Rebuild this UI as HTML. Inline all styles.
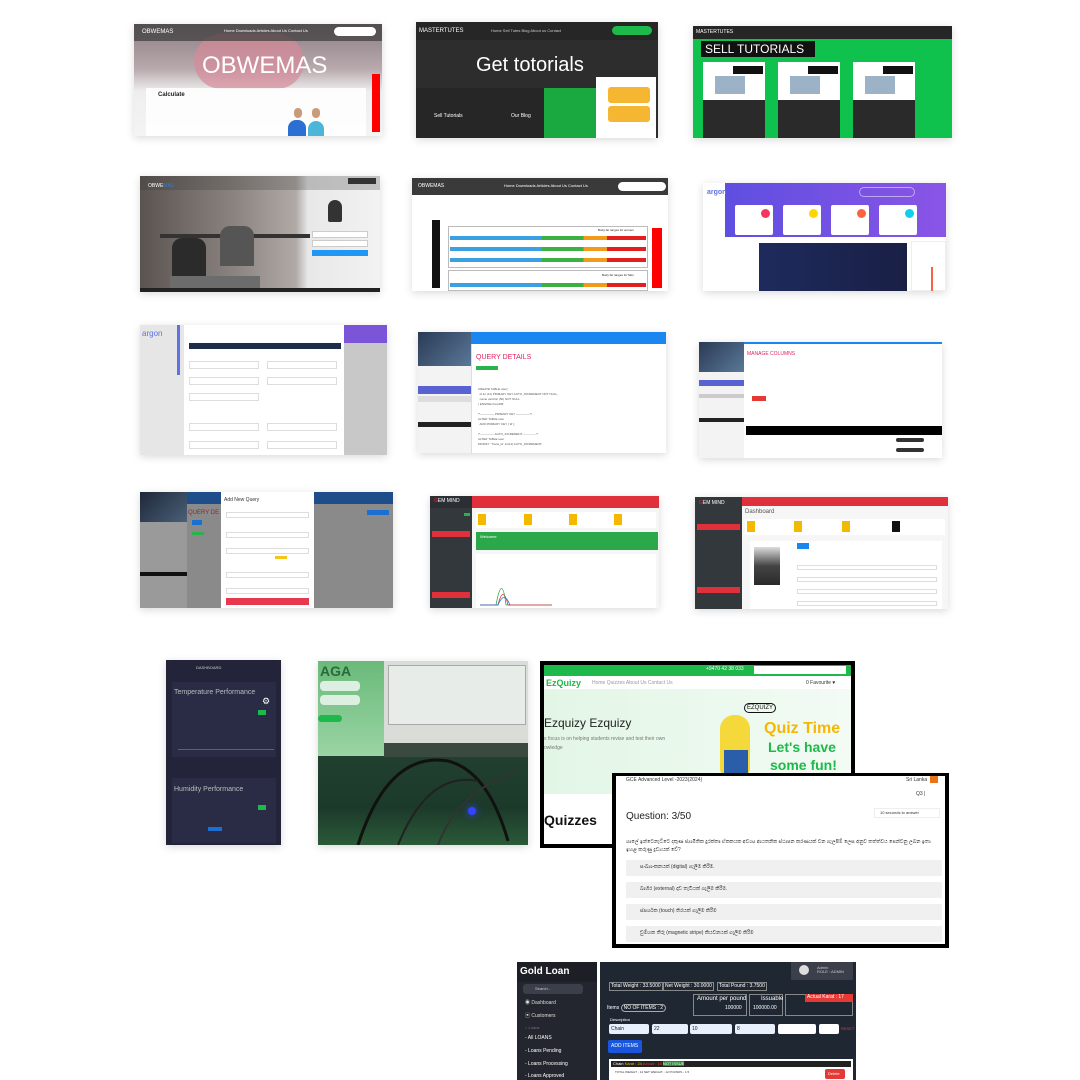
<!DOCTYPE html>
<html><head><meta charset="utf-8">
<style>
*{margin:0;padding:0;box-sizing:border-box}
body{width:1080px;height:1080px;background:#fff;position:relative;overflow:hidden;font-family:"Liberation Sans","Noto Sans CJK SC",sans-serif}
.a{position:absolute}
.t{position:absolute;white-space:nowrap;line-height:1}
.sh{box-shadow:0 2px 8px rgba(0,0,0,.15)}
</style></head><body>

<!-- A OBWEMAS -->
<div class="a sh" style="left:134px;top:24px;width:248px;height:112px;background:linear-gradient(180deg,#8a7c80 0%,#b8a9ad 40%,#eee 60%,#f4f4f4 100%);overflow:hidden">
 <div class="a" style="left:60px;top:10px;width:110px;height:55px;background:#d68a9a;opacity:.7;border-radius:30px"></div>
 <div class="a" style="left:0;top:0;width:248px;height:17px;background:rgba(60,60,60,.7)"></div>
 <div class="t" style="left:8px;top:5px;font-size:6px;color:#fff">OBWEMAS</div>
 <div class="t" style="left:90px;top:5px;font-size:4px;color:#fff">Home  Downloads  Articles  About Us  Contact Us</div>
 <div class="a" style="left:200px;top:3px;width:42px;height:9px;background:#fff;border-radius:5px"></div>
 <div class="t" style="left:68px;top:30px;font-size:24px;color:#fff">OBWEMAS</div>
 <div class="a" style="left:12px;top:64px;width:220px;height:48px;background:rgba(255,255,255,.85)"></div>
 <div class="t" style="left:24px;top:68px;font-size:6px;color:#222;font-weight:bold">Calculate</div>
 <div class="a" style="left:154px;top:96px;width:18px;height:16px;background:#2a6fd1;border-radius:8px 8px 0 0"></div>
 <div class="a" style="left:174px;top:97px;width:16px;height:15px;background:#4cb6d8;border-radius:8px 8px 0 0"></div>
 <div class="a" style="left:160px;top:84px;width:8px;height:10px;background:#c99b7a;border-radius:4px"></div>
 <div class="a" style="left:178px;top:84px;width:8px;height:10px;background:#c99b7a;border-radius:4px"></div>
 <div class="a" style="left:238px;top:50px;width:8px;height:58px;background:#f00"></div>
</div>

<!-- B MASTERTUTES -->
<div class="a sh" style="left:416px;top:22px;width:242px;height:116px;background:#2d2d2d;overflow:hidden">
 <div class="a" style="left:0;top:0;width:242px;height:18px;background:#262626"></div>
 <div class="t" style="left:3px;top:6px;font-size:6px;color:#fff">MASTERTUTES</div>
 <div class="t" style="left:75px;top:7px;font-size:4px;color:#ccc">Home    Sell Tutes    Blog    About us    Contact</div>
 <div class="a" style="left:196px;top:4px;width:40px;height:9px;border:1px solid #1db94a;border-radius:5px;background:#1db94a"></div>
 <div class="t" style="left:60px;top:33px;font-size:20px;color:#fff">Get totorials</div>
 <div class="a" style="left:0;top:66px;width:128px;height:50px;background:#262626"></div>
 <div class="a" style="left:128px;top:66px;width:60px;height:50px;background:#1aa940"></div>
 <div class="a" style="left:188px;top:66px;width:20px;height:50px;background:#21c050"></div>
 <div class="t" style="left:18px;top:92px;font-size:5px;color:#fff">Sell Tutorials</div>
 <div class="t" style="left:95px;top:92px;font-size:5px;color:#fff">Our Blog</div>
 <div class="a" style="left:180px;top:55px;width:60px;height:61px;background:#fff"></div>
 <div class="a" style="left:192px;top:65px;width:42px;height:16px;background:#f5b731;border-radius:3px"></div>
 <div class="a" style="left:192px;top:84px;width:42px;height:16px;background:#f5b731;border-radius:3px"></div>
</div>

<!-- C SELL TUTORIALS -->
<div class="a sh" style="left:693px;top:26px;width:259px;height:112px;background:#0ec24d;overflow:hidden">
 <div class="a" style="left:0;top:0;width:259px;height:13px;background:#262626"></div>
 <div class="t" style="left:3px;top:4px;font-size:5px;color:#fff">MASTERTUTES</div>
 <div class="a" style="left:8px;top:15px;width:114px;height:16px;background:#111"></div>
 <div class="t" style="left:12px;top:17px;font-size:12px;color:#fff">SELL TUTORIALS</div>
 <div class="a" style="left:10px;top:36px;width:62px;height:76px;background:#fff"></div>
 <div class="a" style="left:85px;top:36px;width:62px;height:76px;background:#fff"></div>
 <div class="a" style="left:160px;top:36px;width:62px;height:76px;background:#fff"></div>
 <div class="a" style="left:10px;top:74px;width:62px;height:38px;background:#2a2a2a"></div>
 <div class="a" style="left:85px;top:74px;width:62px;height:38px;background:#2a2a2a"></div>
 <div class="a" style="left:160px;top:74px;width:62px;height:38px;background:#2a2a2a"></div>
 <div class="a" style="left:40px;top:40px;width:30px;height:8px;background:#111"></div>
 <div class="a" style="left:115px;top:40px;width:30px;height:8px;background:#111"></div>
 <div class="a" style="left:190px;top:40px;width:30px;height:8px;background:#111"></div>
 <div class="a" style="left:22px;top:50px;width:30px;height:18px;background:#5a7fa0;opacity:.6"></div>
 <div class="a" style="left:97px;top:50px;width:30px;height:18px;background:#5a7fa0;opacity:.6"></div>
 <div class="a" style="left:172px;top:50px;width:30px;height:18px;background:#5a7fa0;opacity:.6"></div>
</div>

<!-- D gym photo -->
<div class="a sh" style="left:140px;top:176px;width:240px;height:116px;background:linear-gradient(90deg,#5a5450,#8c8480 40%,#b0aaa6 65%,#e8e8e8 70%,#f2f2f2);overflow:hidden">
 <div class="a" style="left:0;top:0;width:240px;height:14px;background:rgba(50,50,50,.25)"></div>
 <div class="t" style="left:8px;top:8px;font-size:5px;color:#fff">OBWE<span style="color:#2a7de1">MAS</span></div>
 <div class="a" style="left:20px;top:58px;width:150px;height:4px;background:#333"></div>
 <div class="a" style="left:32px;top:62px;width:34px;height:40px;background:#2b2b2b;border-radius:10px 10px 0 0"></div>
 <div class="a" style="left:80px;top:50px;width:34px;height:40px;background:#555;border-radius:10px 10px 0 0"></div>
 <div class="a" style="left:30px;top:100px;width:90px;height:16px;background:#6c6c6c"></div>
 <div class="a" style="left:188px;top:24px;width:14px;height:22px;background:#333;border-radius:7px 7px 2px 2px"></div>
 <div class="a" style="left:172px;top:55px;width:56px;height:7px;background:#fff;border:1px solid #ccc"></div>
 <div class="a" style="left:172px;top:64px;width:56px;height:7px;background:#fff;border:1px solid #ccc"></div>
 <div class="a" style="left:172px;top:74px;width:56px;height:6px;background:#2196f3"></div>
 <div class="a" style="left:208px;top:2px;width:28px;height:6px;background:#333"></div>
 <div class="a" style="left:0;top:112px;width:240px;height:4px;background:#222"></div>
</div>

<!-- E body ranges -->
<div class="a sh" style="left:412px;top:178px;width:256px;height:113px;background:#fff;overflow:hidden">
 <div class="a" style="left:0;top:0;width:256px;height:17px;background:#3a3a3a"></div>
 <div class="t" style="left:6px;top:6px;font-size:5px;color:#fff">OBWEMAS</div>
 <div class="t" style="left:92px;top:6px;font-size:4px;color:#fff">Home  Downloads  Articles  About Us  Contact Us</div>
 <div class="a" style="left:206px;top:4px;width:48px;height:9px;background:#fff;border-radius:5px"></div>
 <div class="a" style="left:20px;top:42px;width:8px;height:68px;background:#111"></div>
 <div class="a" style="left:36px;top:48px;width:200px;height:42px;border:1px solid #bbb"></div>
 <div class="a" style="left:36px;top:92px;width:200px;height:21px;border:1px solid #bbb"></div>
 <div class="t" style="left:186px;top:51px;font-size:3px;color:#222">Body fat ranges for women</div>
 <div class="t" style="left:190px;top:96px;font-size:3px;color:#222">Body fat ranges for Men</div>
 <div class="a" style="left:38px;top:58px;width:196px;height:4px;background:linear-gradient(90deg,#3aa0e0 0 47%,#3cb043 47% 68%,#f29a1b 68% 80%,#e02020 80%)"></div>
 <div class="a" style="left:38px;top:69px;width:196px;height:4px;background:linear-gradient(90deg,#3aa0e0 0 47%,#3cb043 47% 68%,#f29a1b 68% 80%,#e02020 80%)"></div>
 <div class="a" style="left:38px;top:80px;width:196px;height:4px;background:linear-gradient(90deg,#3aa0e0 0 47%,#3cb043 47% 68%,#f29a1b 68% 80%,#e02020 80%)"></div>
 <div class="a" style="left:38px;top:105px;width:196px;height:4px;background:linear-gradient(90deg,#3aa0e0 0 47%,#3cb043 47% 68%,#f29a1b 68% 80%,#e02020 80%)"></div>
 <div class="a" style="left:240px;top:50px;width:10px;height:60px;background:#f00"></div>
</div>

<!-- F argon -->
<div class="a sh" style="left:703px;top:183px;width:243px;height:108px;background:#fff;overflow:hidden">
 <div class="a" style="left:22px;top:0;width:221px;height:54px;background:linear-gradient(90deg,#5e4fe0,#8a55e6)"></div>
 <div class="t" style="left:4px;top:6px;font-size:7px;color:#5e72e4;font-weight:bold">argon</div>
 <div class="a" style="left:156px;top:4px;width:56px;height:10px;border:1px solid rgba(255,255,255,.5);border-radius:6px"></div>
 <div class="a" style="left:32px;top:22px;width:38px;height:30px;background:#fff;border-radius:2px"></div>
 <div class="a" style="left:80px;top:22px;width:38px;height:30px;background:#fff;border-radius:2px"></div>
 <div class="a" style="left:128px;top:22px;width:38px;height:30px;background:#fff;border-radius:2px"></div>
 <div class="a" style="left:176px;top:22px;width:38px;height:30px;background:#fff;border-radius:2px"></div>
 <div class="a" style="left:58px;top:26px;width:9px;height:9px;background:#f5365c;border-radius:50%"></div>
 <div class="a" style="left:106px;top:26px;width:9px;height:9px;background:#ffd600;border-radius:50%"></div>
 <div class="a" style="left:154px;top:26px;width:9px;height:9px;background:#fb6340;border-radius:50%"></div>
 <div class="a" style="left:202px;top:26px;width:9px;height:9px;background:#11cdef;border-radius:50%"></div>
 <div class="a" style="left:56px;top:60px;width:148px;height:48px;background:linear-gradient(90deg,#1d2b5c,#1a1f45)"></div>
 <div class="a" style="left:208px;top:58px;width:35px;height:50px;background:#fff;border:1px solid #eee"></div>
 <div class="a" style="left:228px;top:84px;width:2px;height:24px;background:#fb6340"></div>
</div>

<!-- G argon form -->
<div class="a sh" style="left:140px;top:325px;width:247px;height:130px;background:#c8c8c8;overflow:hidden">
 <div class="a" style="left:0;top:0;width:45px;height:130px;background:#e6e6e6"></div>
 <div class="t" style="left:2px;top:5px;font-size:8px;color:#5e72e4">argon</div>
 <div class="a" style="left:44px;top:0;width:160px;height:130px;background:#fff"></div>
 <div class="a" style="left:49px;top:18px;width:152px;height:6px;background:#1f2d4a"></div>
 <div class="a" style="left:204px;top:0;width:43px;height:18px;background:#7b55d8"></div>
 <div class="a" style="left:37px;top:0;width:3px;height:50px;background:#5e72e4"></div>
 <div class="a" style="left:49px;top:36px;width:70px;height:8px;border:1px solid #ddd"></div>
 <div class="a" style="left:127px;top:36px;width:70px;height:8px;border:1px solid #ddd"></div>
 <div class="a" style="left:49px;top:52px;width:70px;height:8px;border:1px solid #ddd"></div>
 <div class="a" style="left:127px;top:52px;width:70px;height:8px;border:1px solid #ddd"></div>
 <div class="a" style="left:49px;top:68px;width:70px;height:8px;border:1px solid #ddd"></div>
 <div class="a" style="left:49px;top:98px;width:70px;height:8px;border:1px solid #ddd"></div>
 <div class="a" style="left:127px;top:98px;width:70px;height:8px;border:1px solid #ddd"></div>
 <div class="a" style="left:49px;top:116px;width:70px;height:8px;border:1px solid #ddd"></div>
 <div class="a" style="left:127px;top:116px;width:70px;height:8px;border:1px solid #ddd"></div>
</div>

<!-- H QUERY DETAILS -->
<div class="a sh" style="left:418px;top:332px;width:248px;height:121px;background:#fff;overflow:hidden">
 <div class="a" style="left:0;top:0;width:53px;height:34px;background:linear-gradient(135deg,#2a3a55,#5a7898)"></div>
 <div class="a" style="left:53px;top:0;width:195px;height:12px;background:#1a86f0"></div>
 <div class="t" style="left:58px;top:22px;font-size:7px;color:#e0245e">QUERY DETAILS</div>
 <div class="a" style="left:58px;top:34px;width:22px;height:4px;background:#2ab34a"></div>
 <div class="a" style="left:0;top:34px;width:53px;height:87px;background:#f3f3f3"></div>
 <div class="a" style="left:0;top:54px;width:53px;height:8px;background:#5862d0"></div>
 <div class="a" style="left:0;top:64px;width:53px;height:6px;background:#ddd"></div>
 <div class="a" style="left:0;top:90px;width:53px;height:5px;background:#222"></div>
 <div class="a" style="left:53px;top:12px;width:1px;height:109px;background:#ddd"></div>
 <div class="t" style="left:60px;top:55px;font-size:3px;color:#555;line-height:5px;white-space:pre">CREATE TABLE user(
  id int (11) PRIMARY KEY AUTO_INCREMENT NOT NULL,
  name varchar (50) NOT NULL
) ENGINE=InnoDB;

/*-------------- PRIMARY KEY --------------*/
ALTER TABLE user
  ADD PRIMARY KEY (`id`);

/*-------------- AUTO_INCREMENT -------------*/
ALTER TABLE user
MODIFY `Trans_id` int(11) AUTO_INCREMENT;</div>
</div>

<!-- I MANAGE COLUMNS -->
<div class="a sh" style="left:699px;top:342px;width:243px;height:116px;background:#fff;overflow:hidden">
 <div class="a" style="left:0;top:0;width:45px;height:30px;background:linear-gradient(135deg,#2a3a55,#5a7898)"></div>
 <div class="a" style="left:45px;top:0;width:198px;height:2px;background:#1a86f0"></div>
 <div class="t" style="left:48px;top:10px;font-size:5px;color:#e0245e">MANAGE COLUMNS</div>
 <div class="a" style="left:0;top:30px;width:45px;height:86px;background:#f3f3f3"></div>
 <div class="a" style="left:0;top:38px;width:45px;height:6px;background:#5862d0"></div>
 <div class="a" style="left:0;top:52px;width:45px;height:4px;background:#ccc"></div>
 <div class="a" style="left:0;top:76px;width:45px;height:4px;background:#222"></div>
 <div class="a" style="left:53px;top:54px;width:14px;height:5px;background:#e53935"></div>
 <div class="a" style="left:47px;top:84px;width:196px;height:9px;background:#000"></div>
 <div class="a" style="left:197px;top:96px;width:28px;height:4px;background:#333;border-radius:2px"></div>
 <div class="a" style="left:197px;top:106px;width:28px;height:4px;background:#333;border-radius:2px"></div>
</div>

<!-- J Add New Query -->
<div class="a sh" style="left:140px;top:492px;width:253px;height:116px;background:#8a8a8a;overflow:hidden">
 <div class="a" style="left:0;top:0;width:47px;height:30px;background:linear-gradient(135deg,#1e2838,#4a5f78)"></div>
 <div class="a" style="left:47px;top:0;width:206px;height:12px;background:#1e4d8a"></div>
 <div class="a" style="left:0;top:30px;width:47px;height:86px;background:#9a9a9a"></div>
 <div class="a" style="left:0;top:80px;width:47px;height:4px;background:#111"></div>
 <div class="a" style="left:81px;top:0;width:93px;height:116px;background:#fff"></div>
 <div class="t" style="left:84px;top:6px;font-size:5px;color:#333">Add New Query</div>
 <div class="t" style="left:48px;top:18px;font-size:6px;color:#8b2a2a">QUERY DE</div>
 <div class="a" style="left:52px;top:28px;width:10px;height:5px;background:#1a6fd0"></div>
 <div class="a" style="left:52px;top:40px;width:12px;height:3px;background:#2ab34a"></div>
 <div class="a" style="left:227px;top:18px;width:22px;height:5px;background:#1a6fd0"></div>
 <div class="a" style="left:86px;top:20px;width:83px;height:6px;border:1px solid #ddd"></div>
 <div class="a" style="left:86px;top:40px;width:83px;height:6px;border:1px solid #ddd"></div>
 <div class="a" style="left:86px;top:56px;width:83px;height:6px;border:1px solid #ddd"></div>
 <div class="a" style="left:135px;top:64px;width:12px;height:3px;background:#f5c518"></div>
 <div class="a" style="left:86px;top:80px;width:83px;height:6px;border:1px solid #ddd"></div>
 <div class="a" style="left:86px;top:96px;width:83px;height:6px;border:1px solid #ddd"></div>
 <div class="a" style="left:86px;top:106px;width:83px;height:7px;background:#e63950"></div>
</div>

<!-- K GEM MIND -->
<div class="a sh" style="left:430px;top:496px;width:229px;height:112px;background:#f6f6f6;overflow:hidden">
 <div class="a" style="left:0;top:0;width:42px;height:112px;background:#33383d"></div>
 <div class="a" style="left:0;top:0;width:42px;height:12px;background:#2b2f33"></div>
 <div class="t" style="left:4px;top:3px;font-size:5px;color:#fff"><span style="color:#e0303c">G</span>EM MIND</div>
 <div class="a" style="left:42px;top:0;width:187px;height:12px;background:#e0303c"></div>
 <div class="a" style="left:2px;top:35px;width:38px;height:6px;background:#e0303c"></div>
 <div class="a" style="left:2px;top:96px;width:38px;height:6px;background:#e0303c"></div>
 <div class="a" style="left:34px;top:17px;width:6px;height:3px;background:#2ab34a"></div>
 <div class="a" style="left:46px;top:16px;width:180px;height:16px;background:#fff"></div>
 <div class="a" style="left:48px;top:18px;width:8px;height:11px;background:#f5b800"></div>
 <div class="a" style="left:94px;top:18px;width:8px;height:11px;background:#f5b800"></div>
 <div class="a" style="left:139px;top:18px;width:8px;height:11px;background:#f5b800"></div>
 <div class="a" style="left:184px;top:18px;width:8px;height:11px;background:#f5b800"></div>
 <div class="a" style="left:46px;top:36px;width:182px;height:18px;background:#2aa84a"></div>
 <div class="t" style="left:50px;top:39px;font-size:4px;color:#fff">Welcome</div>
 <div class="a" style="left:46px;top:58px;width:180px;height:54px;background:#fff"></div>
 <svg class="a" style="left:50px;top:74px" width="72" height="36"><path d="M0 35 L16 35 Q22 2 26 35 L72 35" stroke="#2aa84a" fill="none" stroke-width="0.8"/><path d="M0 35 L18 35 Q23 14 28 35 L72 35" stroke="#e0303c" fill="none" stroke-width="0.8"/><path d="M0 35 L18 35 Q24 20 30 35" stroke="#2a6fd0" fill="none" stroke-width="0.8"/></svg>
</div>

<!-- L Dashboard profile -->
<div class="a sh" style="left:695px;top:497px;width:253px;height:112px;background:#f6f6f6;overflow:hidden">
 <div class="a" style="left:0;top:0;width:47px;height:112px;background:#33383d"></div>
 <div class="t" style="left:4px;top:4px;font-size:5px;color:#fff"><span style="color:#e0303c">G</span>EM MIND</div>
 <div class="a" style="left:47px;top:0;width:206px;height:9px;background:#e0303c"></div>
 <div class="t" style="left:50px;top:12px;font-size:6px;color:#555">Dashboard</div>
 <div class="a" style="left:2px;top:27px;width:43px;height:6px;background:#e0303c"></div>
 <div class="a" style="left:2px;top:90px;width:43px;height:6px;background:#e0303c"></div>
 <div class="a" style="left:50px;top:22px;width:200px;height:16px;background:#fff"></div>
 <div class="a" style="left:52px;top:24px;width:8px;height:11px;background:#f5b800"></div>
 <div class="a" style="left:99px;top:24px;width:8px;height:11px;background:#f5b800"></div>
 <div class="a" style="left:147px;top:24px;width:8px;height:11px;background:#f5b800"></div>
 <div class="a" style="left:197px;top:24px;width:8px;height:11px;background:#111"></div>
 <div class="a" style="left:55px;top:44px;width:192px;height:68px;background:#fff"></div>
 <div class="a" style="left:59px;top:50px;width:26px;height:38px;background:linear-gradient(#ddd,#444 50%,#2a2a2a)"></div>
 <div class="a" style="left:102px;top:46px;width:12px;height:6px;background:#1a86f0"></div>
 <div class="a" style="left:102px;top:68px;width:140px;height:5px;border:1px solid #ddd"></div>
 <div class="a" style="left:102px;top:80px;width:140px;height:5px;border:1px solid #ddd"></div>
 <div class="a" style="left:102px;top:92px;width:140px;height:5px;border:1px solid #ddd"></div>
 <div class="a" style="left:102px;top:104px;width:140px;height:5px;border:1px solid #ddd"></div>
</div>

<!-- M mobile dashboard -->
<div class="a sh" style="left:166px;top:660px;width:115px;height:185px;background:#23243a;overflow:hidden">
 <div class="t" style="left:30px;top:6px;font-size:4px;color:#ccc">DASHBOARD</div>
 <div class="a" style="left:6px;top:22px;width:104px;height:75px;background:#2a2c46"></div>
 <div class="t" style="left:8px;top:29px;font-size:7px;color:#bbb">Temperature Performance</div>
 <div class="a" style="left:96px;top:36px;width:10px;height:10px;color:#fff;font-size:9px">⚙</div>
 <div class="a" style="left:92px;top:50px;width:8px;height:5px;background:#1db94a"></div>
 <div class="a" style="left:12px;top:89px;width:96px;height:1px;background:#e23"></div>
 <div class="a" style="left:6px;top:118px;width:104px;height:65px;background:#2a2c46"></div>
 <div class="t" style="left:8px;top:126px;font-size:7px;color:#bbb">Humidity Performance</div>
 <div class="a" style="left:92px;top:145px;width:8px;height:5px;background:#1db94a"></div>
 <div class="a" style="left:42px;top:167px;width:14px;height:4px;background:#1a6fd0"></div>
</div>

<!-- N photo -->
<div class="a sh" style="left:318px;top:661px;width:210px;height:184px;background:linear-gradient(180deg,#4a8a5a 0%,#224030 50%,#1c3a2a 80%,#2a5a38 100%);overflow:hidden">
 <div class="a" style="left:0;top:0;width:66px;height:95px;background:linear-gradient(#6aba7a,#9ad4a4)"></div>
 <div class="t" style="left:2px;top:3px;font-size:14px;color:#2a6a3a;font-weight:bold">AGA</div>
 <div class="a" style="left:2px;top:20px;width:40px;height:10px;background:#dcefe0;border-radius:4px"></div>
 <div class="a" style="left:2px;top:34px;width:40px;height:10px;background:#dcefe0;border-radius:4px"></div>
 <div class="a" style="left:0;top:54px;width:24px;height:7px;background:#1db94a;border-radius:4px"></div>
 <div class="a" style="left:66px;top:0;width:144px;height:82px;background:#d8ddd8"></div>
 <div class="a" style="left:70px;top:4px;width:138px;height:60px;background:#e8ece8;border:1px solid #aaa"></div>
 <div class="a" style="left:66px;top:82px;width:144px;height:14px;background:#3a4a40"></div>
 <div class="a" style="left:150px;top:146px;width:8px;height:8px;background:#3344ff;border-radius:50%;box-shadow:0 0 8px #44f"></div>
 <svg class="a" style="left:0;top:80px" width="210" height="104"><path d="M40 104 Q70 10 130 20 Q170 30 190 100" stroke="#111" fill="none" stroke-width="3"/><path d="M80 104 Q110 30 160 40" stroke="#222" fill="none" stroke-width="2"/><path d="M120 104 Q140 50 200 30" stroke="#333" fill="none" stroke-width="2"/></svg>
</div>

<!-- O EzQuizy -->
<div class="a" style="left:540px;top:661px;width:315px;height:187px;background:#000"></div>
<div class="a" style="left:544px;top:665px;width:307px;height:179px;background:#fff;overflow:hidden">
 <div class="a" style="left:0;top:0;width:307px;height:11px;background:#1db94a"></div>
 <div class="a" style="left:210px;top:1px;width:92px;height:8px;background:#fff"></div>
 <div class="t" style="left:162px;top:2px;font-size:5px;color:#fff">+9470 42 38 033</div>
 <div class="t" style="left:2px;top:14px;font-size:9px;color:#1db94a;font-weight:bold">EzQuizy</div>
 <div class="t" style="left:48px;top:16px;font-size:5px;color:#999">Home    Quizzes    About Us    Contact Us</div>
 <div class="t" style="left:262px;top:16px;font-size:5px;color:#333">0 Favourite ♥</div>
 <div class="a" style="left:0;top:24px;width:307px;height:105px;background:linear-gradient(90deg,#e2f6e6,#f3fbf4)"></div>
 <div class="t" style="left:0;top:52px;font-size:12px;color:#222">Ezquizy Ezquizy</div>
 <div class="t" style="left:0;top:72px;font-size:5px;color:#777">s focus is on helping students revise and test their own</div>
 <div class="t" style="left:0;top:81px;font-size:5px;color:#777">owledge</div>
 <div class="a" style="left:176px;top:50px;width:30px;height:60px;background:#f5d83a;border-radius:14px 14px 6px 6px"></div>
 <div class="a" style="left:180px;top:85px;width:24px;height:25px;background:#2a5ea8"></div>
 <div class="t" style="left:200px;top:38px;font-size:6px;color:#111;border:1px solid #111;border-radius:6px;padding:1px 2px">EZQUIZY</div>
 <div class="t" style="left:220px;top:56px;font-size:16px;color:#f5b800;font-weight:bold">Quiz Time</div>
 <div class="t" style="left:224px;top:75px;font-size:14px;color:#1db94a;font-weight:bold">Let's have</div>
 <div class="t" style="left:226px;top:93px;font-size:14px;color:#1db94a;font-weight:bold">some fun!</div>
 <div class="t" style="left:0;top:148px;font-size:14px;color:#111;font-weight:bold">Quizzes</div>
</div>

<!-- P Question -->
<div class="a" style="left:612px;top:773px;width:337px;height:175px;background:#000"></div>
<div class="a" style="left:616px;top:776px;width:329px;height:168px;background:#fff;overflow:hidden">
 <div class="t" style="left:10px;top:2px;font-size:5px;color:#333">GCE Advanced Level -2023(2024)</div>
 <div class="t" style="left:290px;top:2px;font-size:5px;color:#333">Sri Lanka</div>
 <div class="a" style="left:314px;top:0;width:8px;height:7px;background:#e8741a"></div>
 <div class="t" style="left:300px;top:16px;font-size:5px;color:#333">Q3 |</div>
 <div class="t" style="left:10px;top:36px;font-size:10px;color:#222">Question: 3/50</div>
 <div class="a" style="left:258px;top:32px;width:66px;height:10px;border:1px solid #eee"></div>
 <div class="t" style="left:264px;top:35px;font-size:4px;color:#333">10 seconds to answer</div>
 <div class="t" style="left:10px;top:62px;font-size:5px;color:#333;line-height:8px;white-space:normal;width:315px">ශාලේ ඉන්ටෙනැට්ටෙ දකුණ ජ්‍යාමිතික දුරක්තෘ ඒකකයක අවශ්‍ය ආයතනික ස්ථාපන කරණයක් වන ගැලපීම් ලෙස අනුව තත්ත්වය පෙන්වනු ලබන ඉතා ඉහළ කරුණු ද්‍රව්‍යයක් වේ?</div>
 <div class="a" style="left:10px;top:84px;width:316px;height:16px;background:#f0f0f0"></div>
 <div class="a" style="left:10px;top:106px;width:316px;height:16px;background:#f0f0f0"></div>
 <div class="a" style="left:10px;top:128px;width:316px;height:16px;background:#f0f0f0"></div>
 <div class="a" style="left:10px;top:150px;width:316px;height:16px;background:#f0f0f0"></div>
 <div class="t" style="left:24px;top:89px;font-size:5px;color:#333">සංඛ්‍යාංකනයක් (digital) ගැලීම කිරීම.</div>
 <div class="t" style="left:24px;top:111px;font-size:5px;color:#333">බාහිර (external) දෘඩ තැටියක් ගැලීම කිරීම.</div>
 <div class="t" style="left:24px;top:133px;font-size:5px;color:#333">ස්පර්ශක (touch) තිරයක් ගැලීම කිරීම</div>
 <div class="t" style="left:24px;top:155px;font-size:5px;color:#333">චුම්භක තීරු (magnetic stripe) කියවනයක් ගැලීම කිරීම</div>
</div>

<!-- Q Gold Loan -->
<div class="a" style="left:517px;top:962px;width:339px;height:118px;background:#fff;overflow:hidden">
 <div class="a" style="left:0;top:0;width:80px;height:118px;background:#23262e"></div>
 <div class="a" style="left:0;top:0;width:80px;height:20px;background:#1c1f26"></div>
 <div class="t" style="left:3px;top:5px;font-size:10px;color:#fff;font-weight:bold">Gold Loan</div>
 <div class="a" style="left:6px;top:22px;width:60px;height:10px;background:#3a3f4a;border-radius:3px"></div>
 <div class="t" style="left:18px;top:25px;font-size:4px;color:#ccc">Search...</div>
 <div class="t" style="left:8px;top:39px;font-size:5px;color:#ddd">◉ Dashboard</div>
 <div class="t" style="left:8px;top:52px;font-size:5px;color:#ddd">▣ Customers</div>
 <div class="t" style="left:8px;top:64px;font-size:4px;color:#777">○ Loans</div>
 <div class="t" style="left:8px;top:74px;font-size:5px;color:#fff">- All LOANS</div>
 <div class="t" style="left:8px;top:87px;font-size:5px;color:#fff">- Loans Pending</div>
 <div class="t" style="left:8px;top:100px;font-size:5px;color:#fff">- Loans Processing</div>
 <div class="t" style="left:8px;top:112px;font-size:5px;color:#fff">- Loans Approved</div>
 <div class="a" style="left:83px;top:0;width:256px;height:118px;background:#1f2733"></div>
 <div class="a" style="left:274px;top:0;width:62px;height:18px;background:#3a3f4a"></div>
 <div class="a" style="left:282px;top:3px;width:10px;height:10px;background:#ddd;border-radius:50%"></div>
 <div class="t" style="left:300px;top:4px;font-size:4px;color:#ccc">Admin<br>ROLE : ADMIN</div>
 <div class="t" style="left:92px;top:20px;font-size:5px;color:#fff;border:1px solid #888;padding:1px">Total Weight : 33.5000</div>
 <div class="t" style="left:146px;top:20px;font-size:5px;color:#fff;border:1px solid #888;padding:1px">Net Weight : 30.0000</div>
 <div class="t" style="left:200px;top:20px;font-size:5px;color:#fff;border:1px solid #888;padding:1px">Total Pound : 3.7500</div>
 <div class="a" style="left:176px;top:32px;width:54px;height:22px;border:1px solid #888"></div>
 <div class="t" style="left:180px;top:34px;font-size:6px;color:#fff">Amount per pound</div>
 <div class="t" style="left:208px;top:44px;font-size:5px;color:#fff">100000</div>
 <div class="a" style="left:232px;top:32px;width:34px;height:22px;border:1px solid #888"></div>
 <div class="t" style="left:244px;top:34px;font-size:6px;color:#fff">Issuable</div>
 <div class="t" style="left:236px;top:44px;font-size:5px;color:#fff">100000.00</div>
 <div class="a" style="left:268px;top:32px;width:68px;height:22px;border:1px solid #888"></div>
 <div class="a" style="left:288px;top:32px;width:48px;height:8px;background:#e53935"></div>
 <div class="t" style="left:290px;top:33px;font-size:5px;color:#fff">Actual Karat : 17</div>
 <div class="t" style="left:90px;top:44px;font-size:5px;color:#fff">Items <span style="border:1px solid #aaa;border-radius:4px;padding:0 2px">NO OF ITEMS : 2</span></div>
 <div class="t" style="left:93px;top:56px;font-size:4px;color:#fff">Description</div>
 <div class="a" style="left:92px;top:62px;width:40px;height:10px;background:#e8f0fe;border-radius:2px"></div>
 <div class="a" style="left:135px;top:62px;width:36px;height:10px;background:#e8f0fe;border-radius:2px"></div>
 <div class="a" style="left:173px;top:62px;width:42px;height:10px;background:#e8f0fe;border-radius:2px"></div>
 <div class="a" style="left:218px;top:62px;width:40px;height:10px;background:#e8f0fe;border-radius:2px"></div>
 <div class="a" style="left:261px;top:62px;width:38px;height:10px;background:#fff;border-radius:2px"></div>
 <div class="a" style="left:302px;top:62px;width:20px;height:10px;background:#fff;border-radius:2px"></div>
 <div class="t" style="left:94px;top:65px;font-size:5px;color:#222">Chain</div>
 <div class="t" style="left:137px;top:65px;font-size:5px;color:#222">22</div>
 <div class="t" style="left:175px;top:65px;font-size:5px;color:#222">10</div>
 <div class="t" style="left:220px;top:65px;font-size:5px;color:#222">8</div>
 <div class="t" style="left:324px;top:65px;font-size:4px;color:#e53935">RESET</div>
 <div class="a" style="left:91px;top:78px;width:34px;height:13px;background:#1a56db;border-radius:2px"></div>
 <div class="t" style="left:94px;top:82px;font-size:5px;color:#fff">ADD ITEMS</div>
 <div class="a" style="left:92px;top:97px;width:244px;height:21px;background:#fff"></div>
 <div class="a" style="left:94px;top:99px;width:240px;height:6px;background:#222"></div>
 <div class="t" style="left:96px;top:100px;font-size:4px;color:#fff">Chain  <span style="color:#f5b800">Karat : 24</span>  <span style="color:#e53935">Actual : 18</span>  <span style="background:#2a8a3a">NOT ISSUE</span></div>
 <div class="t" style="left:98px;top:109px;font-size:3px;color:#333">TOTAL WEIGHT - 14   NET WEIGHT - 12   POUNDS - 1.5</div>
 <div class="a" style="left:308px;top:107px;width:20px;height:10px;background:#e53935;border-radius:2px"></div>
 <div class="t" style="left:311px;top:110px;font-size:4px;color:#fff">Delete</div>
</div>

</body></html>
